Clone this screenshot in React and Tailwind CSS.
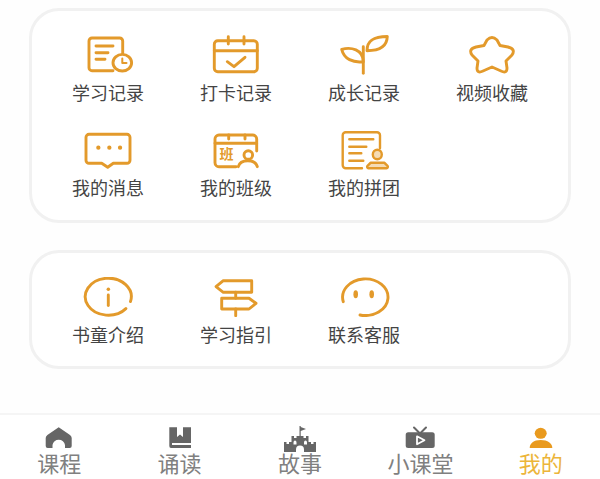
import React from "react";

const ORANGE = "#e39a2b";

const LineIcon = ({ children }) => (
  <svg
    width="56"
    height="40"
    viewBox="0 0 56 40"
    fill="none"
    stroke={ORANGE}
    strokeWidth="2.9"
    strokeLinecap="round"
    strokeLinejoin="round"
  >
    {children}
  </svg>
);

const StudyIcon = () => (
  <LineIcon>
    <path d="M33 35.7H12a3 3 0 0 1-3-3V6a3 3 0 0 1 3-3h27.7a3 3 0 0 1 3 3v12.5" />
    <path d="M16 11h17M16 17.7h12M16 24.3h9" />
    <ellipse cx="42.3" cy="27.7" rx="9.3" ry="8.3" />
    <path d="M42.3 23.5v4.5h4.2" strokeWidth="2" />
  </LineIcon>
);

const CheckinIcon = () => (
  <LineIcon>
    <rect x="6.3" y="5.7" width="43" height="31" rx="3.5" />
    <path d="M6.3 15.7h43M20.3 1.7V9M36 1.7V9" />
    <path d="M19.3 26.7l6.7 5 11-9.4" />
  </LineIcon>
);

const SproutIcon = () => (
  <LineIcon>
    <path d="M27.3 11.7v26.6" />
    <path d="M5.7 14.3C15 12 27 14 27.3 26.7 17 28 8 24 5.7 14.3z" />
    <path d="M51.3 1.5C40 1.5 31 4 31 15.7 42 15.7 51 13 51.3 1.5z" />
  </LineIcon>
);

const StarIcon = () => (
  <LineIcon>
    <path d="M23 5Q28 0 33 5L36 10.5 44 12Q52 14 48 20L42 26 43 33Q43 39 37 36L28 32 19 36Q13 39 13 33L14 26 8 20Q4 14 12 12L20 10.5Z" />
  </LineIcon>
);

const MessageIcon = () => (
  <LineIcon>
    <path d="M21.7 33.3H9a3 3 0 0 1-3-3V7.3a3 3 0 0 1 3-3h38a3 3 0 0 1 3 3v23a3 3 0 0 1-3 3H33.3l-5.6 4z" />
    <path d="M18.3 17.7h.1M29.3 17.7h.1M40 17.7h.1" strokeWidth="4.2" />
  </LineIcon>
);

const ClassIcon = () => (
  <LineIcon>
    <path d="M28 36.7H11a4 4 0 0 1-4-4V9a4 4 0 0 1 4-4h33.7a4 4 0 0 1 4 4v12" />
    <path d="M7 13.3h41.7M20.7 5v4M37 5v4" />
    <ellipse cx="40.3" cy="25" rx="4.3" ry="4.3" />
    <path d="M30.3 36.7c1-4 5-6 9.5-6s8.5 2 9.5 6" />
    <text
      x="11.5"
      y="28.5"
      fontSize="14"
      fontWeight="700"
      fill={ORANGE}
      stroke="none"
      fontFamily="'Noto Sans CJK SC', sans-serif"
    >
      班
    </text>
  </LineIcon>
);

const GroupIcon = () => (
  <LineIcon>
    <path d="M26 38.3H9.7a3 3 0 0 1-3-3V5.3a3 3 0 0 1 3-3H41a3 3 0 0 1 3 3v13" strokeWidth="2.4" />
    <path d="M13.3 9.3h24M13.3 16.7h17M13.3 23.3h12M13.3 30.7h14" strokeWidth="2.4" />
    <ellipse cx="41.3" cy="24.5" rx="4.5" ry="4.7" fill={ORANGE} fillOpacity="0.35" strokeWidth="2.4" />
    <path d="M32.5 38.3h18a1.5 1.5 0 0 0 1-2.5l-3-3h-14l-3 3a1.5 1.5 0 0 0 1 2.5z" fill={ORANGE} fillOpacity="0.35" strokeWidth="2.4" />
  </LineIcon>
);

const InfoIcon = () => (
  <LineIcon>
    <path d="M45.9 31.6A23 18.5 0 1 1 50.5 24.5" />
    <path d="M28.3 12.3h.1" strokeWidth="3.4" />
    <path d="M28.3 18v10.5" />
  </LineIcon>
);

const GuideIcon = () => (
  <LineIcon>
    <path d="M8 9.7l7.3-6h28.4v11.6H15.3z" />
    <path d="M13.7 21.3H41l7 5-7 5.7H13.7z" />
    <path d="M27.7 15.3v6M27.7 32v6.7" />
  </LineIcon>
);

const ServiceIcon = () => (
  <LineIcon>
    <path d="M7.3 24.7A22.7 18.3 0 1 1 24 38" />
    <ellipse cx="19.7" cy="17.3" rx="2.3" ry="4" fill={ORANGE} stroke="none" />
    <ellipse cx="35.7" cy="17.3" rx="2.3" ry="4" fill={ORANGE} stroke="none" />
  </LineIcon>
);

const HomeTab = () => (
  <path d="M19.7 1.3L31 9Q32.7 10.5 32.7 12V20Q32.7 22 30.7 22H26V19A6.3 6 0 0 0 13.5 19V22H8.7Q6.7 22 6.7 20V12Q6.7 10.5 8.4 9Z" />
);

const BookTab = () => (
  <path d="M9.3 1.3H17V11L20 8.5 23 11V1.3H31V17H12V19H31V22H11Q9.3 22 9.3 20Z" />
);

const CastleTab = () => (
  <>
    <path d="M19.5 0h1.2v1L26 3l-5.3 2v5h-1.2z" />
    <path
      fillRule="evenodd"
      d="M4 16h2.5v2H9v-2h2.5v-6h2.5v2h2.500v-2h7v2H26v-2h2.500v6H31v2h2.500v-2H36v10H24v-2.500a4 4 0 0 0-8 0V26H4zM15 14.500a1.500 2 0 0 0-1.500 2v2h3v-2a1.500 2 0 0 0-1.500-2zM25.500 14.500a1.500 2 0 0 0-1.500 2v2h3v-2a1.500 2 0 0 0-1.500-2z"
    />
  </>
);

const TvTab = () => (
  <>
    <path d="M14 1.500l5 5M26 1.500l-5 5" fill="none" stroke="currentColor" strokeWidth="2" strokeLinecap="round" />
    <rect x="5.700" y="6.300" width="29" height="15.700" rx="2.500" />
    <path d="M17 10.300l7.500 3.900-7.500 4z" fill="none" stroke="#fff" strokeWidth="1.800" strokeLinejoin="round" />
  </>
);

const PersonTab = () => (
  <>
    <ellipse cx="19.700" cy="7.300" rx="6" ry="5.500" />
    <path d="M8.700 22c0-4.500 4-8 11-8s11.600 3.500 11.600 8z" />
  </>
);

const topItems = [
  { label: "学习记录", icon: StudyIcon },
  { label: "打卡记录", icon: CheckinIcon },
  { label: "成长记录", icon: SproutIcon },
  { label: "视频收藏", icon: StarIcon },
  { label: "我的消息", icon: MessageIcon },
  { label: "我的班级", icon: ClassIcon },
  { label: "我的拼团", icon: GroupIcon },
];

const bottomItems = [
  { label: "书童介绍", icon: InfoIcon },
  { label: "学习指引", icon: GuideIcon },
  { label: "联系客服", icon: ServiceIcon },
];

const tabs = [
  { label: "课程", icon: HomeTab },
  { label: "诵读", icon: BookTab },
  { label: "故事", icon: CastleTab },
  { label: "小课堂", icon: TvTab },
  { label: "我的", icon: PersonTab, active: true },
];

const MenuGrid = ({ items }) => (
  <div className="grid grid-cols-4 gap-y-[28px]">
    {items.map(({ label, icon: Icon }) => (
      <div key={label} className="flex flex-col items-center">
        <Icon />
        <span className="mt-[7px] text-[18px] leading-[20px] text-[#444444]">{label}</span>
      </div>
    ))}
  </div>
);

export default function App() {
  return (
    <div className="flex h-[479px] w-[600px] flex-col overflow-hidden bg-[#fefefe] font-['Noto_Sans_CJK_SC','Noto_Sans',sans-serif]">
      <div className="mx-[29px] mt-2 rounded-[30px] border-[3px] border-[#f1f1f1] bg-white px-[12px] pb-[23px] pt-[24px]">
        <MenuGrid items={topItems} />
      </div>
      <div className="mx-[29px] mt-[27px] rounded-[30px] border-[3px] border-[#f1f1f1] bg-white px-[12px] pb-[22px] pt-[24px]">
        <MenuGrid items={bottomItems} />
      </div>
      <nav className="-mx-px mt-auto grid h-[66px] grid-cols-5 border-t-2 border-[#f5f5f5] bg-white pt-[11px]">
        {tabs.map(({ label, icon: Icon, active }) => (
          <div
            key={label}
            className={`flex flex-col items-center ${active ? "text-[#ecb53a]" : "text-[#808080]"}`}
          >
            <svg
              width="40"
              height="26"
              viewBox="0 0 40 26"
              fill="currentColor"
              className={active ? "text-[#e99a1e]" : "text-[#666666]"}
            >
              <Icon />
            </svg>
            <span className="-mt-[2px] text-[22px] leading-[24px]">{label}</span>
          </div>
        ))}
      </nav>
    </div>
  );
}
